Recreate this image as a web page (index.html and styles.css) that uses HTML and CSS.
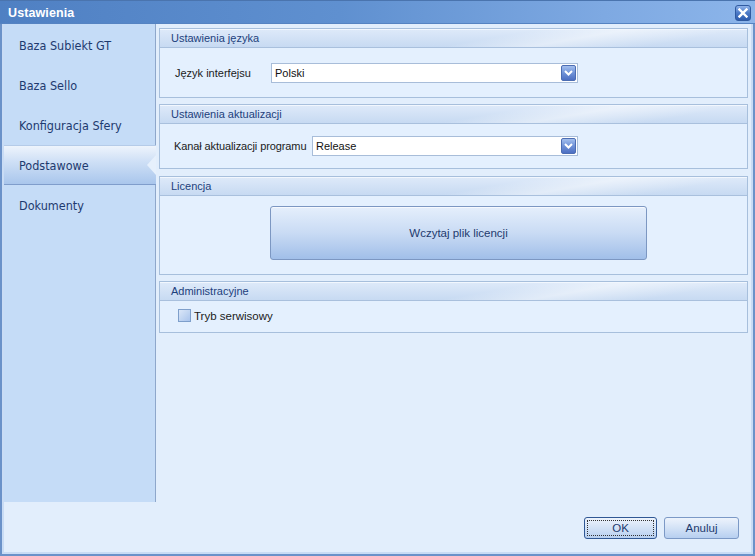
FILE: index.html
```html
<!DOCTYPE html>
<html lang="pl">
<head>
<meta charset="utf-8">
<title>Ustawienia</title>
<link rel="stylesheet" href="styles.css">
</head>
<body>
<div class="window">
  <div class="titlebar">
    <span class="title">Ustawienia</span>
    <span class="close">
      <svg width="10" height="10" viewBox="0 0 10 10"><path d="M1.5 1.5 L8.5 8.5 M8.5 1.5 L1.5 8.5" stroke="#fff" stroke-width="2.4" stroke-linecap="square"/></svg>
    </span>
  </div>
  <div class="main">
    <nav class="nav">
      <div class="nav-item">Baza Subiekt GT</div>
      <div class="nav-item">Baza Sello</div>
      <div class="nav-item">Konfiguracja Sfery</div>
      <div class="nav-item selected">Podstawowe<span class="notch"></span></div>
      <div class="nav-item">Dokumenty</div>
    </nav>
    <div class="content">
      <section class="group g1">
        <div class="group-head">Ustawienia języka</div>
        <div class="group-body row">
          <span class="label l1">Język interfejsu</span>
          <div class="combo c1"><span>Polski</span><span class="drop"><svg width="9" height="6" viewBox="0 0 9 6"><path d="M1 1 L4.5 4.5 L8 1" stroke="#fff" stroke-width="2" fill="none"/></svg></span></div>
        </div>
      </section>
      <section class="group g2">
        <div class="group-head">Ustawienia aktualizacji</div>
        <div class="group-body row">
          <span class="label l2">Kanał aktualizacji programu</span>
          <div class="combo c2"><span>Release</span><span class="drop"><svg width="9" height="6" viewBox="0 0 9 6"><path d="M1 1 L4.5 4.5 L8 1" stroke="#fff" stroke-width="2" fill="none"/></svg></span></div>
        </div>
      </section>
      <section class="group g3">
        <div class="group-head">Licencja</div>
        <div class="group-body">
          <div class="big-btn">Wczytaj plik licencji</div>
        </div>
      </section>
      <section class="group g4">
        <div class="group-head">Administracyjne</div>
        <div class="group-body row">
          <span class="check"></span><span class="check-label">Tryb serwisowy</span>
        </div>
      </section>
    </div>
  </div>
  <div class="footer">
    <div class="btn ok"><span class="focus">OK</span></div>
    <div class="btn">Anuluj</div>
  </div>
</div>
</body>
</html>
```
FILE: styles.css
```css
* { box-sizing: border-box; }
html, body { margin: 0; padding: 0; }
body {
  width: 755px;
  height: 556px;
  overflow: hidden;
  font-family: "Liberation Sans", Arial, sans-serif;
  font-size: 11px;
  color: #1b1b1b;
}
.window {
  width: 755px;
  height: 556px;
  display: flex;
  flex-direction: column;
  background: #e2eefc;
  border-left: 2px solid #6b92c9;
  border-right: 2px solid #6b92c9;
  border-bottom: 2px solid #6b92c9;
  box-shadow: inset 2px 0 0 #c9dcf5, inset -2px 0 0 #c9dcf5, inset 0 -2px 0 #c9dcf5;
}
.titlebar {
  height: 24px;
  margin: 0 -2px;
  flex: none;
  display: flex;
  align-items: center;
  justify-content: space-between;
  padding: 0 4px 0 8px;
  background: linear-gradient(to right, #4f80c3 0%, #5f90d0 45%, #7ea9e2 80%, #8cb5ea 100%);
  border-top: 1px solid #4a74ae;
  box-shadow: inset 0 -1px 0 #5583c2;
}
.title {
  color: #fff;
  font-weight: bold;
  font-size: 12.5px;
  letter-spacing: 0.1px;
}
.close {
  width: 16px;
  height: 16px;
  border-radius: 3px;
  border: 1px solid #2f5aa0;
  background: linear-gradient(to bottom, #8fb3ea 0%, #4b79c6 50%, #2e5cad 100%);
  display: flex;
  align-items: center;
  justify-content: center;
  margin-top: 1px;
}
.main {
  flex: none;
  height: 478px;
  display: flex;
  padding-left: 2px;
  padding-right: 1px;
}
.nav {
  width: 152px;
  flex: none;
  background: #c5dcf7;
  border-right: 1px solid #8ea7cb;
  padding-top: 1px;
}
.nav-item {
  position: relative;
  height: 40px;
  display: flex;
  align-items: center;
  padding-left: 15px;
  font-size: 12.5px;
  color: #1e3a6f;
  font-family: "DejaVu Sans Condensed", "DejaVu Sans", sans-serif;
}
.nav-item.selected {
  background: linear-gradient(to bottom, #eef4fc 0%, #cfe0f6 40%, #a9c6ec 100%);
  border-top: 1px solid #b5cbe8;
  border-bottom: 1px solid #7f9dcb;
  margin-right: -1px;
}
.notch {
  position: absolute;
  right: 0;
  top: 9px;
  width: 0;
  height: 0;
  border-top: 10px solid transparent;
  border-bottom: 10px solid transparent;
  border-right: 9px solid #e6f0fc;
}
.content {
  flex: 1;
  padding: 4px 4px 0 3px;
  display: flex;
  flex-direction: column;
  gap: 7px;
}
.group {
  border: 1px solid #a7bfdc;
  background: #e4f0fe;
  display: flex;
  flex-direction: column;
}
.g1 { height: 70px; }
.g2 { height: 65px; margin-top: -1px; }
.g3 { height: 99px; }
.g4 { height: 52px; margin-top: -1px; }
.group-head {
  height: 19px;
  flex: none;
  display: flex;
  align-items: center;
  padding-left: 11px;
  padding-bottom: 1px;
  color: #1d3f7c;
  font-size: 11px;
  border-bottom: 1px solid #a9c0dd;
  border-top: 1px solid #f2f7fe;
  background:
    linear-gradient(170deg, rgba(255,255,255,0) 55%, rgba(255,255,255,0.45) 68%, rgba(255,255,255,0) 85%),
    linear-gradient(to bottom, #dde9f9 0%, #c7daf2 100%);
}
.group-body { flex: 1; }
.row { display: flex; align-items: center; padding-left: 15px; }
.label { flex: none; font-size: 11px; color: #1b1b1b; white-space: nowrap; }
.l1 { width: 96px; }
.l2 { width: 138px; margin-left: -1px; letter-spacing: -0.1px; }
.combo {
  height: 20px;
  background: #fff;
  border: 1px solid #a8bdd9;
  display: flex;
  align-items: center;
  justify-content: space-between;
  padding: 0 1px 0 3px;
  font-size: 11px;
  color: #111;
}
.c1 { width: 307px; margin-top: 1px; }
.c2 { width: 266px; }
.drop {
  width: 15px;
  height: 16px;
  border-radius: 2px;
  border: 1px solid #4c6db3;
  background: linear-gradient(to bottom, #a3bfee 0%, #6f92d8 50%, #4d6fc2 100%);
  display: flex;
  align-items: center;
  justify-content: center;
}
.g3 .group-body { padding: 10px 0 0 110px; }
.big-btn {
  width: 377px;
  height: 54px;
  border: 1px solid #7c97c2;
  border-radius: 3px;
  background: linear-gradient(to bottom, #e5effc 0%, #c9dbf4 50%, #a1bfe9 100%);
  box-shadow: inset 0 1px 0 #f6f9fe;
  display: flex;
  align-items: center;
  justify-content: center;
  color: #1e3a6e;
  font-size: 11.5px;
}
.g4 .row { padding-left: 18px; padding-bottom: 2px; }
.check {
  width: 13px;
  height: 13px;
  border: 1px solid #7e9fcb;
  background: linear-gradient(135deg, #dbe7f8 0%, #a9c4ec 100%);
  margin-right: 3px;
}
.check-label { font-size: 11.5px; color: #1b1b1b; }
.footer {
  flex: 1;
  display: flex;
  justify-content: flex-end;
  align-items: flex-start;
  gap: 7px;
  padding: 15px 14px 0 0;
}
.btn {
  width: 75px;
  height: 22px;
  border: 1px solid #7c99c6;
  border-radius: 3px;
  background: linear-gradient(to bottom, #edf3fc 0%, #d3e2f6 50%, #b7cff0 100%);
  display: flex;
  align-items: center;
  justify-content: center;
  color: #1e3a6e;
  font-size: 11.5px;
}
.btn.ok {
  width: 73px;
  border-color: #2f5794;
  padding: 2px;
}
.focus {
  width: 100%;
  height: 100%;
  border: 1px dotted #333;
  display: flex;
  align-items: center;
  justify-content: center;
}
```
